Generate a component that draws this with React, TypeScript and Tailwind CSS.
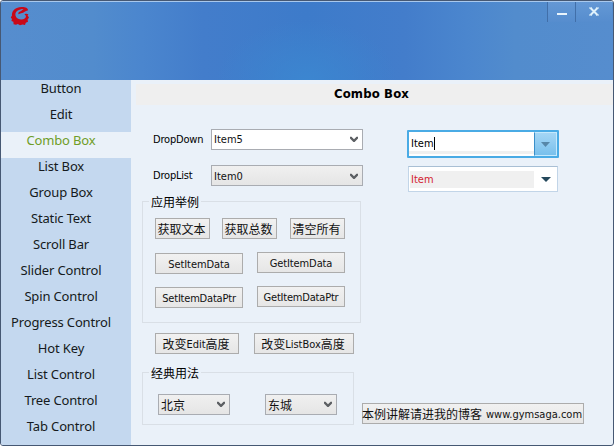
import React from "react";

const items: string[] = [
  "Button",
  "Edit",
  "Combo Box",
  "List Box",
  "Group Box",
  "Static Text",
  "Scroll Bar",
  "Slider Control",
  "Spin Control",
  "Progress Control",
  "Hot Key",
  "List Control",
  "Tree Control",
  "Tab Control",
];

const ui = "font-['DejaVu_Sans_Condensed','Noto_Sans_CJK_SC',sans-serif]";
const cjk = "font-['Noto_Sans_CJK_SC',sans-serif] text-[12px]";

function Chevron() {
  return (
    <svg width="8" height="7" viewBox="0 0 8 7" className="shrink-0">
      <path d="M0 0.8 L1.5 0.8 L4 3.2 L6.5 0.8 L8 0.8 L8 2.6 L4.6 6 L3.4 6 L0 2.6 Z" fill="#5c5f63" />
    </svg>
  );
}

function Button({ className = "", children }: { className?: string; children: React.ReactNode }) {
  return (
    <button
      className={`flex h-[21px] shrink-0 items-center justify-center whitespace-nowrap border border-[#acacac] bg-linear-to-b from-[#f1f1f1] to-[#e6e6e6] leading-none text-[#111] ${className}`}
    >
      {children}
    </button>
  );
}

function Combo({ className = "", children }: { className?: string; children: React.ReactNode }) {
  return (
    <div className={`flex h-[21px] shrink-0 items-center justify-between border border-[#a9acb2] pl-[2px] pr-[4px] leading-none text-[#111] ${className}`}>
      <span>{children}</span>
      <Chevron />
    </div>
  );
}

function Logo() {
  return (
    <svg width="20" height="20" viewBox="0 0 20 20" className="ml-[9px] mt-[4px]">
      <path
        d="M17.8 4.6 C18.6 3.6 17.4 1.6 14.6 1.2 C10 .4 5.4 1.6 3.4 4.4 C2 6.2 1.8 8 2 9.6 L.8 11.4 L2 13 L1.4 15 L3.4 15.8 L3.6 18.2 L6 18.8 L7.8 18 L10 19.2 L12.6 18.6 L15 19 L15.8 16.8 L18 15.8 L17.6 13.6 L19 11.6 L17.6 9.6 L18.4 8.2 L16.4 7.8 L14.4 8 L16 10 C16 12.6 13.6 13.6 11 13.4 C7.8 13.2 5.4 11 5.4 8.4 C5.4 5.4 9 3 13.6 3 C12 3.8 11.6 5 9.4 5.8 C8.4 6.2 8 7.2 8.6 8.2 C10 7 12 7.2 13.6 6.4 C15 5.8 16 4.6 17.8 4.6 Z"
        fill="#c90818"
      />
    </svg>
  );
}

function Header() {
  return (
    <header className="flex h-[79px] shrink-0 items-start border-t border-[#a8c8ed] bg-[radial-gradient(ellipse_90px_60px_at_50%_100%,#3c86d0_0%,transparent_100%),linear-gradient(90deg,#568dce_0%,#528ccd_15%,#4b86ce_23%,#437dcb_33%,#3d7bca_50%,#437dcb_66%,#4b86ce_76%,#528ccd_84%,#568dce_100%)]">
      <Logo />
      <div className="ml-auto mr-px flex h-[20px]">
        <div className="flex w-[28px] justify-center border-l border-[#416fa9] bg-linear-to-b from-[#6498d5] to-[#568dce]">
          <span className="mt-[11px] h-[2px] w-[10px] bg-[#e9f4fc]" />
        </div>
        <div className="flex w-[37px] justify-center border-l border-[#416fa9] bg-linear-to-b from-[#6498d5] to-[#568dce]">
          <svg width="10" height="9" viewBox="0 0 10 9" className="mt-[5px]">
            <path d="M1.5 1 L8.5 8 M8.5 1 L1.5 8" stroke="#dff1fb" strokeWidth="2" />
            <path d="M0 1h3M7 1h3M0 8h3M7 8h3" stroke="#dff1fb" strokeWidth="1" />
          </svg>
        </div>
      </div>
    </header>
  );
}

export default function App() {
  return (
    <div className="flex h-[446px] w-[614px] flex-col overflow-hidden rounded-[3px] border border-[#465873] bg-[#eaf1f9]">
      <Header />
      <div className="flex min-h-0 grow">
        <nav className="w-[130px] shrink-0 bg-[#c4d8ef] font-['Noto_Sans',sans-serif] text-[13px] leading-[16px] tracking-[-0.15px] text-[#151a20]">
          {items.map((name) => (
            <div
              key={name}
              className={`h-[26px] pr-[10px] text-center ${name === "Combo Box" ? "bg-[#eaf1f9] text-[#6f9d28]" : ""}`}
            >
              {name}
            </div>
          ))}
        </nav>

        <main className={`flex min-w-0 grow flex-col text-[11px] ${ui}`}>
          <h1 className="ml-[5px] mt-[4px] h-[21px] shrink-0 bg-[#efefef] pr-[6px] text-center font-['DejaVu_Sans_Condensed',sans-serif] text-[13px] font-bold leading-[19px] tracking-[0.15px] text-black">
            Combo Box
          </h1>

          <div className="flex">
            <section className="ml-[11px] w-[223px]">
              <div className="mt-[24px] flex items-center pl-[11px]">
                <label className="w-[58px] pt-[2px] tracking-[-0.2px]">DropDown</label>
                <Combo className="w-[152px] bg-white">Item5</Combo>
              </div>
              <div className="mt-[15px] flex items-center pl-[11px]">
                <label className="w-[58px] pt-[2px] tracking-[-0.2px]">DropList</label>
                <Combo className="w-[152px] bg-linear-to-b from-[#f0f0f0] to-[#e5e5e5] pt-[1px]">Item0</Combo>
              </div>

              <fieldset className="mt-[7px] h-[130px] w-[219px] border border-[#d9dfe6] pl-[12px]">
                <legend className={`-ml-[6px] h-[16px] px-[2px] leading-[18px] ${cjk}`}>应用举例</legend>
                <div className="mt-[9px] flex gap-[12px]">
                  <Button className={`w-[55px] pr-[2px] ${cjk}`}>获取文本</Button>
                  <Button className={`w-[55px] pr-[2px] ${cjk}`}>获取总数</Button>
                  <Button className={`ml-px w-[55px] pr-[2px] ${cjk}`}>清空所有</Button>
                </div>
                <div className="mt-[13px] flex items-start gap-[14px]">
                  <Button className="mt-px w-[88px] pt-[2px] tracking-[-0.1px]">SetItemData</Button>
                  <Button className="w-[88px] pt-[2px] tracking-[-0.1px]">GetItemData</Button>
                </div>
                <div className="mt-[12px] flex items-start gap-[14px]">
                  <Button className="mt-px w-[88px] pt-[2px] tracking-[-0.2px]">SetItemDataPtr</Button>
                  <Button className="w-[88px] pt-[2px] tracking-[-0.2px]">GetItemDataPtr</Button>
                </div>
              </fieldset>
            </section>

            <section className="ml-[42px] mt-[25px] flex flex-col gap-[8px]">
              <div className="flex h-[28px] w-[152px] rounded-[1px] border-2 border-[#4aabe5] bg-white">
                <div className="flex grow flex-col justify-between">
                  <div className="ml-[2px] mt-[4px] flex items-center">
                    <span className="leading-[15px]">Item</span>
                    <span className="h-[13px] w-px bg-black" />
                  </div>
                  <div className="mb-[2px] h-[3px] bg-[#f0f0f0]" />
                </div>
                <div className="flex w-[23px] items-center justify-center border border-[#c5e9fc] border-l-[#3a8fc9] bg-linear-to-b from-[#a4d6f5] to-[#79c0ec]">
                  <svg width="9" height="5" viewBox="0 0 9 5"><path d="M0 0H9L4.5 5Z" fill="#5787a8" /></svg>
                </div>
              </div>
              <div className="ml-px flex h-[26px] w-[150px] items-center border border-[#c2d5e8] border-t-[#a9bfd4] bg-white pl-px">
                <div className="flex h-[17px] w-[124px] items-center bg-[#f0f0f0] pl-px pt-[2px] text-[#d32430]">Item</div>
                <div className="flex grow justify-center">
                  <svg width="10" height="5" viewBox="0 0 10 5"><path d="M0 0H10L5 5Z" fill="#25495c" /></svg>
                </div>
              </div>
            </section>
          </div>

          <div className="ml-[24px] mt-[10px] flex gap-[15px]">
            <Button className="w-[84px] pr-[2px]"><span className={cjk}>改变</span><span className="pt-px">Edit</span><span className={cjk}>高度</span></Button>
            <Button className="w-[100px] pr-[2px]"><span className={cjk}>改变</span><span className="pt-px">ListBox</span><span className={cjk}>高度</span></Button>
          </div>

          <div className="ml-[11px] mt-[10px] flex items-start">
            <fieldset className="h-[61px] w-[212px] border border-[#d9dfe6] pl-[15px]">
              <legend className={`-ml-[9px] h-[16px] px-[2px] leading-[18px] ${cjk}`}>经典用法</legend>
              <div className="mt-[14px] flex gap-[35px]">
                <Combo className={`w-[72px] bg-linear-to-b from-[#f0f0f0] to-[#e5e5e5] ${cjk}`}>北京</Combo>
                <Combo className={`w-[72px] bg-linear-to-b from-[#f0f0f0] to-[#e5e5e5] ${cjk}`}>东城</Combo>
              </div>
            </fieldset>
            <Button className="ml-[8px] mt-[39px] w-[222px] pr-[2px]">
              <span className={`mr-[4px] ${cjk}`}>本例讲解请进我的博客</span>
              <span className="pt-px">www.gymsaga.com</span>
            </Button>
          </div>
        </main>
      </div>
    </div>
  );
}
